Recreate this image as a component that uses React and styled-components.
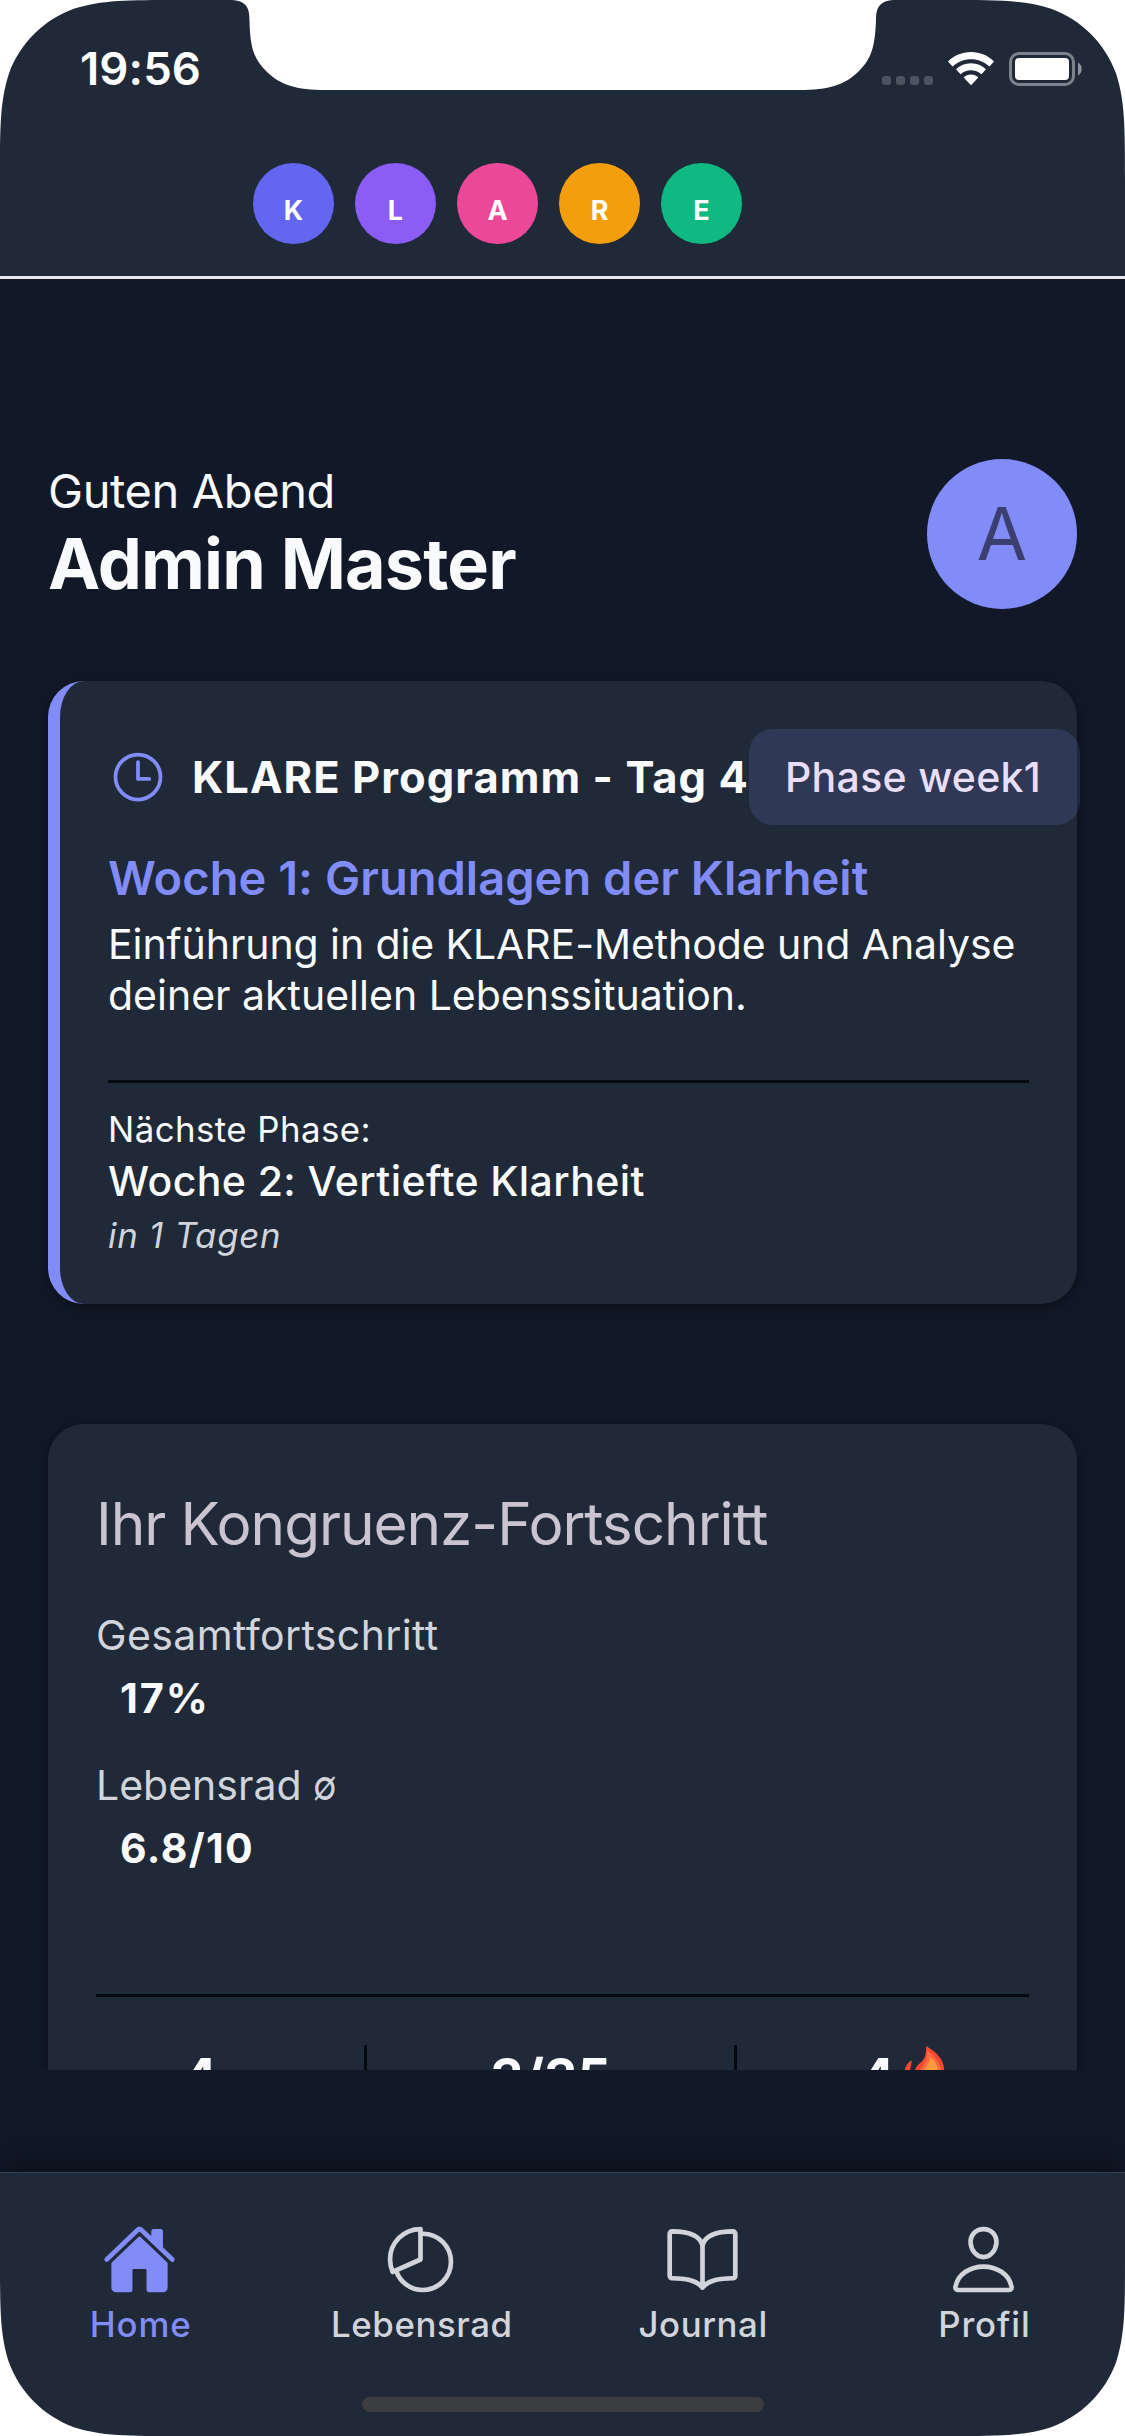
import React from "react";
import styled, { createGlobalStyle } from "styled-components";
import {
  IoTimeOutline,
  IoHome,
  IoPieChartOutline,
  IoBookOutline,
  IoPersonOutline,
} from "react-icons/io5";

const Global = createGlobalStyle`
  * { box-sizing: border-box; }
  html, body { margin: 0; padding: 0; background: #fff; }
`;

const Screen = styled.div`
  position: relative;
  width: 1125px;
  height: 2436px;
  display: flex;
  flex-direction: column;
  overflow: hidden;
  background: #111827;
  color: #f9fafb;
  font-family: Inter, "Liberation Sans", sans-serif;
  font-variant-ligatures: no-common-ligatures;
`;

const Bezel = styled.svg`
  position: absolute;
  inset: 0;
  z-index: 5;
  pointer-events: none;
`;

const Header = styled.header`
  height: 279px;
  flex: none;
  background: #1f2937;
  border-bottom: 3px solid #e5e7eb;
`;

const StatusBar = styled.div`
  height: 138px;
  padding: 0 42px 0 80px;
  display: flex;
  justify-content: space-between;
  align-items: center;
`;

const Text = styled.span`
  display: block;
  white-space: nowrap;
  font-size: ${(p) => p.$size}px;
  line-height: ${(p) => p.$line}px;
  font-weight: ${(p) => p.$weight || 400};
  letter-spacing: ${(p) => p.$track || 0}px;
  font-style: ${(p) => (p.$italic ? "italic" : "normal")};
  color: ${(p) => p.$color || "#f9fafb"};
`;

const StatusIcons = styled.svg`
  display: block;
  flex: none;
`;

const Letters = styled.div`
  display: flex;
  gap: 21px;
  padding: 25px 0 0 252.5px;
`;

const Letter = styled.div`
  width: 81px;
  height: 81px;
  padding-left: 1px;
  border-radius: 50%;
  background: ${(p) => p.$bg};
  color: #fff;
  font-size: 27px;
  font-weight: 700;
  line-height: 95px;
  text-align: center;
`;

const Content = styled.main`
  height: 1791px;
  flex: none;
  overflow: hidden;
  padding: 180px 48px 0;
`;

const Greeting = styled.section`
  display: flex;
  justify-content: space-between;
  height: 150px;
`;

const GreetingText = styled.div`
  padding-top: 2px;
`;

const Avatar = styled.div`
  width: 150px;
  height: 150px;
  border-radius: 50%;
  background: #818cf8;
  color: #3b3f70;
  font-size: 73px;
  line-height: 150px;
  text-align: center;
`;

const Card = styled.section`
  background: #1f2937;
  border-radius: 36px;
  box-shadow: 0 3px 12px rgba(0, 0, 0, 0.4);
`;

const ProgramCard = styled(Card)`
  margin-top: 72px;
  height: 623px;
  border-left: 12px solid #818cf8;
  padding: 48px 48px 0;
`;

const ProgressCard = styled(Card)`
  margin-top: 120px;
  height: 900px;
  padding: 58px 48px 0;
`;

const ProgramHeader = styled.div`
  display: flex;
  align-items: center;
  height: 96px;
  margin-bottom: 24px;
  color: #818cf8;
`;

const ClockIcon = styled(IoTimeOutline)`
  width: 60px;
  height: 60px;
  flex: none;
`;

const ProgramName = styled.div`
  width: 557px;
  flex: none;
  margin-left: 24px;
`;

const Badge = styled.div`
  width: 331px;
  height: 96px;
  flex: none;
  padding-left: 36px;
  border-radius: 24px;
  background: rgba(129, 140, 248, 0.16);
`;

const Description = styled.div`
  margin: 12px 0 59px;
`;

const Divider = styled.div`
  height: 3px;
  background: #06090f;
`;

const NextPhase = styled.div`
  display: grid;
  grid-template-rows: 48px 54px 48px;
  row-gap: 2px;
  padding-top: 22px;
`;

const Metric = styled.div`
  margin-top: ${(p) => p.$top}px;
`;

const MetricValue = styled.div`
  padding: 3px 0 0 24px;
`;

const AverageSign = styled.span`
  display: inline-block;
  transform: scaleX(0.84);
  transform-origin: left center;
`;

const Stats = styled.div`
  display: grid;
  grid-template-columns: 271px 370px 343px;
  margin-top: 48px;
`;

const Stat = styled.div`
  display: flex;
  justify-content: center;
  height: 150px;
  border-right: ${(p) => (p.$last ? 0 : 3)}px solid #06090f;
  padding-right: ${(p) => p.$inset || 0}px;
`;

const FlameIcon = styled.svg`
  width: 62px;
  height: 62px;
  margin: 0 -3px 0 3px;
`;

const TabBar = styled.nav`
  margin-top: auto;
  height: 264px;
  flex: none;
  border-top: 1px solid #374151;
  background: #1f2937;
  box-shadow: 0 -6px 24px rgba(0, 0, 0, 0.4);
`;

const Tabs = styled.div`
  display: grid;
  grid-template-columns: repeat(4, 1fr);
  height: 224px;
`;

const Tab = styled.div`
  display: flex;
  flex-direction: column;
  align-items: center;
  padding-top: 49px;
  color: ${(p) => (p.$active ? "#818cf8" : "#d1d5db")};

  svg {
    width: 75px;
    height: 75px;
    margin-right: 2px;
  }
`;

const HomeIndicator = styled.div`
  width: 402px;
  height: 15px;
  margin: 0 auto;
  border-radius: 8px;
  background: #3b3d41;
`;

const KLARE = [
  ["K", "#6366f1"],
  ["L", "#8b5cf6"],
  ["A", "#ec4899"],
  ["R", "#f59e0b"],
  ["E", "#10b981"],
];

const TABS = [
  { label: "Home", Icon: IoHome, active: true, track: 0.9 },
  { label: "Lebensrad", Icon: IoPieChartOutline, track: 0.6 },
  { label: "Journal", Icon: IoBookOutline, track: 0.55 },
  { label: "Profil", Icon: IoPersonOutline, track: 0.9 },
];

const CORNER =
  "M0 0H178.9C127.4 0 101.6 0 73.9 8.8C43.6 19.8 19.8 43.6 8.8 73.9C0 101.6 0 127.4 0 178.9Z";

const Flame = () => (
  <FlameIcon viewBox="0 0 62 62">
    <path d="M13.500 15C8 19 7 23 5 31L10 36C10 28 14 22 13.500 15Z" fill="#f5482c" />
    <path
      d="M28 1C40 8 47 16 46 27C51 45 47 59 31 60C12 59 10 42 17 26C18 20 22 19 25 15C28 11 28 7 28 1Z"
      fill="#f5482c"
    />
    <path d="M29 5C37 12 44 18 43 30L20 32C21 22 31 18 29 5Z" fill="#ff6a43" />
    <path d="M32 12C38 17 40 20 40 30L23 32C23 24 32 21 32 12Z" fill="#ff9b3d" />
  </FlameIcon>
);

export default function App() {
  return (
    <>
      <Global />
      <Screen>
        <Header>
          <StatusBar>
            <Text $size={45.500} $line={60} $weight={600} $track={0.1} $color="#fff">19:56</Text>
            <StatusIcons width="201" height="36" viewBox="882 51 201 36">
              <g fill="#4d545f">
                {[882, 896, 910, 924].map((x) => (
                  <rect key={x} x={x} y="76" width="9" height="9" rx="3" />
                ))}
              </g>
              <g fill="#fff">
                <path d="M971 52C980 52 988 55.500 994 61.500L989.500 66.500C984.500 61.800 978 59.200 971 59.200S957.500 61.800 952.500 66.500L948 61.500C954 55.500 962 52 971 52Z" />
                <path d="M971 63.200C977 63.200 982 65.400 986 69.300L981.400 74.300C978.500 71.700 975 70.200 971 70.200S963.500 71.700 960.600 74.300L956 69.300C960 65.400 965 63.200 971 63.200Z" />
                <path d="M971 74.500C974 74.500 976.300 75.700 978.300 77.500L971 85.200L963.700 77.500C965.700 75.700 968 74.500 971 74.500Z" />
                <rect x="1015" y="58" width="54" height="22" rx="4" />
              </g>
              <rect x="1010.500" y="53.500" width="63" height="31" rx="8.500" fill="none" stroke="#7d838c" strokeWidth="3" />
              <path d="M1078 62.500C1083 65 1083 73 1078 75.500Z" fill="#8f949b" />
            </StatusIcons>
          </StatusBar>
          <Letters>
            {KLARE.map(([l, bg]) => (
              <Letter key={l} $bg={bg}>{l}</Letter>
            ))}
          </Letters>
        </Header>

        <Content>
          <Greeting>
            <GreetingText>
              <Text $size={47} $line={60} $track={-0.4}>Guten Abend</Text>
              <Text $size={70} $line={85} $weight={700} $track={-0.85}>Admin Master</Text>
            </GreetingText>
            <Avatar>A</Avatar>
          </Greeting>

          <ProgramCard>
            <ProgramHeader>
              <ClockIcon />
              <ProgramName>
                <Text $size={43.500} $line={96} $weight={700} $track={1.06}>KLARE Programm - Tag 4</Text>
              </ProgramName>
              <Badge>
                <Text $size={41} $line={96} $weight={500} $track={0.3} $color="#e8def8">Phase week1</Text>
              </Badge>
            </ProgramHeader>
            <Text $size={47} $line={58} $weight={600} $track={0.03} $color="#818cf8">Woche 1: Grundlagen der Klarheit</Text>
            <Description>
              <Text $size={41} $line={51} $track={-0.09}>Einführung in die KLARE-Methode und Analyse</Text>
              <Text $size={41} $line={51}>deiner aktuellen Lebenssituation.</Text>
            </Description>
            <Divider />
            <NextPhase>
              <Text $size={34.800} $line={48} $track={0.45}>Nächste Phase:</Text>
              <Text $size={41} $line={52} $weight={500} $track={0.42}>Woche 2: Vertiefte Klarheit</Text>
              <Text $size={34.800} $line={48} $track={0.75} $italic $color="#d1d5db">in 1 Tagen</Text>
            </NextPhase>
          </ProgramCard>

          <ProgressCard>
            <Text $size={58.500} $line={84} $track={-1.04} $color="#cac4d0">Ihr Kongruenz-Fortschritt</Text>
            <Metric $top={39}>
              <Text $size={41} $line={60} $track={0.37} $color="#d1d5db">Gesamtfortschritt</Text>
              <MetricValue>
                <Text $size={41.500} $line={60} $weight={700} $track={1.9}>17%</Text>
              </MetricValue>
            </Metric>
            <Metric $top={27}>
              <Text $size={41} $line={60} $color="#d1d5db">
                Lebensrad <AverageSign>∅</AverageSign>
              </Text>
              <MetricValue>
                <Text $size={41} $line={60} $weight={700} $track={1.35}>6.8/10</Text>
              </MetricValue>
            </Metric>
            <Metric $top={116}>
              <Divider />
            </Metric>
            <Stats>
              <Stat $inset={60}>
                <Text $size={52} $line={66} $weight={700}>4</Text>
              </Stat>
              <Stat>
                <Text $size={52} $line={66} $weight={700}>3/35</Text>
              </Stat>
              <Stat $last>
                <Text $size={52} $line={66} $weight={700}>4</Text>
                <Flame />
              </Stat>
            </Stats>
          </ProgressCard>
        </Content>

        <TabBar>
          <Tabs>
            {TABS.map(({ label, Icon, active, track }) => (
              <Tab key={label} $active={active}>
                <Icon />
                <Text
                  $size={34.800}
                  $line={54}
                  $weight={500}
                  $track={track}
                  $color={active ? "#818cf8" : "#d1d5db"}
                >
                  {label}
                </Text>
              </Tab>
            ))}
          </Tabs>
          <HomeIndicator />
        </TabBar>

        <Bezel width="1125" height="2436" viewBox="0 0 1125 2436" fill="#fff">
          <path d={CORNER} />
          <path d={CORNER} transform="translate(1125 0) scale(-1 1)" />
          <path d={CORNER} transform="translate(0 2436) scale(1 -1)" />
          <path d={CORNER} transform="translate(1125 2436) scale(-1 -1)" />
          <path d="M229 0C246 0 249.500 7 249.500 20C250 48 254 59 266 71C280 85 296 90 326 90H799C829 90 845 85 859 71C871 59 875 48 876 20C876 7 880 0 896 0Z" />
        </Bezel>
      </Screen>
    </>
  );
}
